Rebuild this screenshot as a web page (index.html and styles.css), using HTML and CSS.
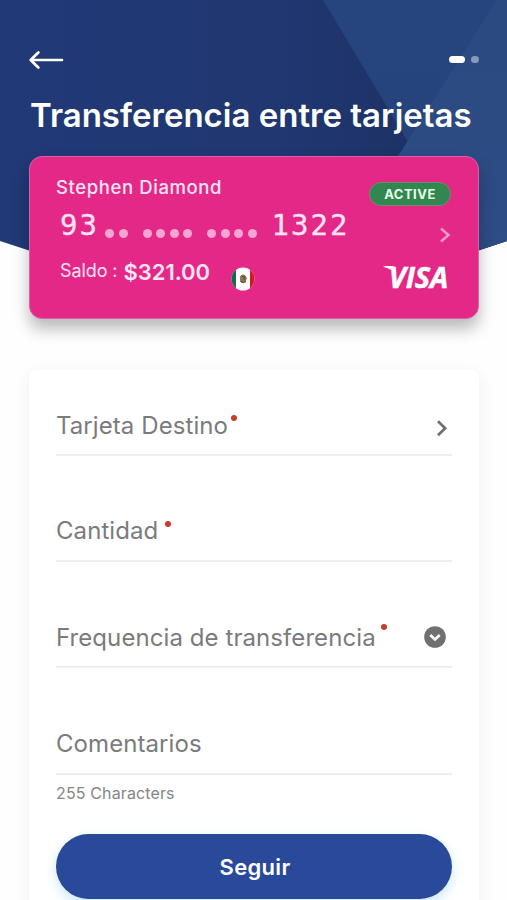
FILE: index.html
```html
<!DOCTYPE html>
<html lang="es">
<head>
<meta charset="utf-8">
<meta name="viewport" content="width=device-width, initial-scale=1">
<title>Transferencia entre tarjetas</title>
<link rel="stylesheet" href="styles.css">
</head>
<body>
<svg class="backdrop" viewBox="0 0 507 300" preserveAspectRatio="none" aria-hidden="true">
  <defs>
    <linearGradient id="base" x1="0" y1="0" x2="1" y2="0"><stop offset="0" stop-color="#213977"/><stop offset=".55" stop-color="#203771"/><stop offset=".8" stop-color="#1e3266"/></linearGradient>
    <linearGradient id="facet" x1="0" y1="0" x2="0" y2="1"><stop offset="0" stop-color="#26457e"/><stop offset="1" stop-color="#25407c"/></linearGradient>
    <linearGradient id="side" x1="0" y1="0" x2="0" y2="1"><stop offset="0" stop-color="#2b4a80"/><stop offset="1" stop-color="#2e4c86"/></linearGradient>
  </defs>
  <path fill="url(#base)" d="M0 0H507V241L400 276H107L0 241Z"/>
  <path fill="url(#facet)" d="M323 0H507V241L474 252Z"/>
  <path fill="url(#side)" d="M497 0H507V241L400 276L345 240Z"/>
</svg>
<main class="screen">
  <nav class="topbar">
    <svg class="back" width="36" height="20" viewBox="0 0 36 20" fill="none" stroke="#fff" stroke-width="2.700" stroke-linecap="round" stroke-linejoin="round"><path d="M33 10H2.500M9.300 2.500L1.700 10L9.300 17.500"/></svg>
    <div class="pager"><span class="page current"></span><span class="page"></span></div>
  </nav>
  <h1 class="title">Transferencia entre tarjetas</h1>

  <section class="card">
    <div class="details">
      <div class="holder">Stephen Diamond</div>
      <div class="number">
        <span class="digits">93</span>
        <span class="dots"><i></i><i></i></span>
        <span class="dots"><i></i><i></i><i></i><i></i></span>
        <span class="dots"><i></i><i></i><i></i><i></i></span>
        <span class="digits last">1322</span>
      </div>
      <div class="balance">
        <span class="balance-label">Saldo :</span>
        <strong class="amount">$321.00</strong>
        <svg class="flag" width="24" height="24" viewBox="0 0 24 24"><defs><clipPath id="round"><circle cx="12" cy="12" r="11.500"/></clipPath></defs><g clip-path="url(#round)"><path fill="#fff" d="M0 0h24v24H0z"/><path fill="#136b4a" d="M0 0h5v24H0z"/><path fill="#cf1c2b" d="M19 0H24v24h-5z"/><path fill="#8b7954" d="M9 9.500q2-3 5-1.500l2 3-1.500 4-3.500 1-2-2z"/><path d="M10.500 9l3 1-.5 3M9.500 14.500q3 2.500 5.500 0" fill="none" stroke="#55482c"/></g></svg>
      </div>
    </div>
    <div class="aside">
      <span class="badge">ACTIVE</span>
      <svg class="go" width="12" height="18" viewBox="0 0 12 18" fill="none" stroke="#f69aca" stroke-width="2.500"><path d="M2 2.500L9.500 9L2 15.500"/></svg>
      <div class="visa"><svg class="wing" width="13" height="10" viewBox="0 0 13 10" fill="#fff"><path d="M0 .8Q1 0 3 0H9Q11 0 11.500 2L13 9Q9 2.500 0 .8Z"/></svg><span>VISA</span></div>
    </div>
  </section>

  <form class="form">
    <div class="field first">
      <span class="label destination">Tarjeta Destino</span><i class="required"></i>
      <svg class="chevron" width="14" height="18" viewBox="0 0 14 18" fill="none" stroke="#707070" stroke-width="2.700"><path d="M3 2.300L10.200 9.200L3 16.200"/></svg>
    </div>
    <div class="field amount-field">
      <span class="label">Cantidad</span><i class="required"></i>
    </div>
    <div class="field frequency">
      <span class="label">Frequencia de transferencia</span><i class="required"></i>
      <svg class="select" width="22" height="22" viewBox="0 0 22 22"><circle cx="11" cy="11" r="10.800" fill="#707070"/><path d="M6.300 9L11 13.400L15.700 9" fill="none" stroke="#fff" stroke-width="2.700"/></svg>
    </div>
    <div class="field comments">
      <span class="label">Comentarios</span>
    </div>
    <div class="hint">255 Characters</div>
    <button class="submit" type="button">Seguir</button>
  </form>
</main>
</body>
</html>
```

FILE: styles.css
```css
* { box-sizing: border-box; }
body {
  margin: 0;
  height: 900px;
  overflow: hidden;
  position: relative;
  background: #fefefe;
  font-family: Inter, "Liberation Sans", sans-serif;
}
svg { display: block; flex: none; }
.backdrop { position: absolute; top: 0; left: 0; width: 507px; height: 300px; }
.screen { position: relative; padding: 50px 28px 0 29px; }

.topbar { display: flex; justify-content: space-between; align-items: center; height: 20px; }
.pager { display: flex; align-items: center; gap: 6px; height: 18px; margin-bottom: 2px; }
.page { width: 8px; height: 7px; border-radius: 4px; background: #8799bc; }
.page.current { width: 16px; background: #fff; }

.title {
  margin: 25px 0 0 1px;
  height: 61px;
  line-height: 40px;
  font-size: 33px;
  font-weight: 600;
  letter-spacing: 0;
  color: #fff;
  white-space: nowrap;
}

.card {
  display: flex;
  justify-content: space-between;
  width: 450px;
  height: 163px;
  padding: 0 27px 0 26px;
  border: 1px solid #dc5faa;
  border-radius: 13px;
  background: #e42887;
  box-shadow: 0 10px 16px rgba(0, 0, 0, .27);
  color: #ffe4f3;
  white-space: nowrap;
}
.holder { margin-top: 18px; line-height: 24px; font-size: 18.5px; font-weight: 500; letter-spacing: .6px; }
.number { display: flex; align-items: flex-start; height: 34px; margin-top: 9px; padding-left: 4px; }
.digits { width: 40px; font: 29px/34px "DejaVu Sans Mono", monospace; letter-spacing: 2px; -webkit-text-stroke: .3px #ffe4f3; }
.dots { display: flex; gap: 4.500px; margin: 21px 15px 0 0; }
.dots i { width: 9px; height: 9px; border-radius: 50%; background: #f8a5d3; }
.digits + .dots { margin-left: 5px; }
.digits.last { width: 78px; margin-left: 0; }
.balance { display: flex; align-items: center; height: 30px; padding-left: 4px; margin-top: 15px; }
.balance-label { margin-top: -2px; font-size: 18px; line-height: 24px; letter-spacing: -.1px; }
.amount { margin-left: 6px; font-size: 22px; line-height: 28px; font-weight: 600; letter-spacing: 0; }
.flag { margin: 13px 0 0 21px; }

.aside { display: flex; flex-direction: column; align-items: flex-end; }
.badge {
  width: 82px;
  height: 24px;
  margin: 25px 0 0;
  border: 1px solid #708d6d;
  border-radius: 12px;
  background: #32864f;
  color: #eaffea;
  font-size: 13px;
  font-weight: 700;
  line-height: 22px;
  letter-spacing: .5px;
  text-align: center;
}
.go { margin-top: 20px; }
.visa { position: relative; margin: 16px 3px 0 0; height: 32px; font: italic 700 29px/33px "Open Sans", sans-serif; color: #fff; letter-spacing: -.2px; -webkit-text-stroke: .5px #fff; }
.wing { position: absolute; left: -6px; top: 6px; }

.form {
  width: 450px;
  height: 560px;
  margin-top: 51px;
  padding: 41px 27px 0;
  border-radius: 8px;
  background: #fff;
  box-shadow: 0 4px 17px rgba(0, 0, 0, .065);
}
.field { display: flex; align-items: flex-start; height: 46px; margin-top: 60px; border-bottom: 2px solid #eeeeee; }
.field.first { height: 45px; margin-top: 0; }
.label { line-height: 30px; font-size: 24px; color: #7b7b7b; letter-spacing: .08px; white-space: nowrap; }
.required { width: 6px; height: 6px; margin: 4px 0 0 3px; border-radius: 50%; background: #c33f2b; }
.chevron { margin: 8px 3px 0 auto; }
.amount-field .required { margin: 5px 0 0 7px; }
.field.frequency { height: 45px; margin-top: 61px; }
.frequency .required { margin: 1px 0 0 5px; }
.select { margin: 3px 6px 0 auto; }
.field.comments { height: 46px; margin-top: 61px; }
.hint { margin-top: 7px; line-height: 22px; font-size: 16px; color: #858585; letter-spacing: .13px; }
.submit {
  display: block;
  width: 396px;
  height: 65px;
  margin-top: 30px;
  padding: 0 0 0 2px;
  border: 0;
  border-radius: 33px;
  background: #294a9a;
  box-shadow: 0 5px 12px rgba(80, 175, 240, .3);
  color: #fff;
  font: 600 22px/64px Inter, sans-serif;
  letter-spacing: .3px;
}
```
